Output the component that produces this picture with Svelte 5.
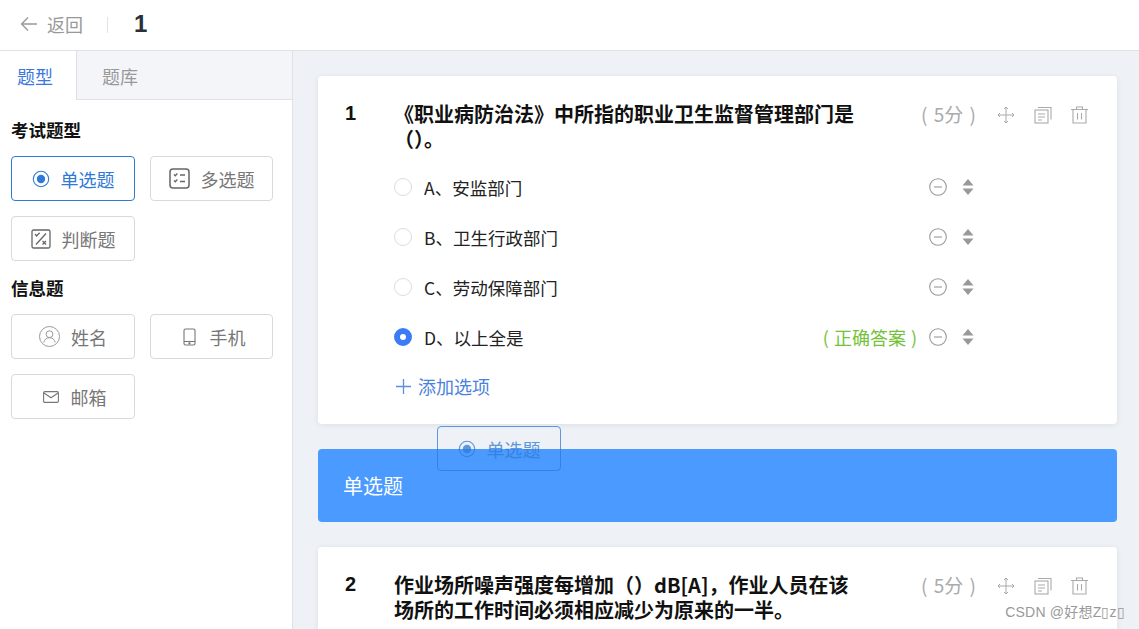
<script>
  const examTypes = [
    { id: 'radio', label: '单选题', active: true },
    { id: 'multi', label: '多选题' },
    { id: 'judge', label: '判断题' }
  ];
  const infoTypes = [
    { id: 'user', label: '姓名' },
    { id: 'phone', label: '手机' },
    { id: 'mail', label: '邮箱' }
  ];
  const options = [
    { text: 'A、安监部门' },
    { text: 'B、卫生行政部门' },
    { text: 'C、劳动保障部门' },
    { text: 'D、以上全是', correct: true }
  ];
</script>

{#snippet typeIcon(id)}
  {#if id === 'radio'}
    <svg class="ic" width="18" height="18" viewBox="0 0 18 18"><circle cx="9" cy="9" r="7.7" fill="none" stroke="currentColor" stroke-width="1.1"/><circle cx="9" cy="9" r="4.2" fill="currentColor"/></svg>
  {:else if id === 'multi'}
    <svg class="ic" width="21" height="21" viewBox="0 0 21 21" fill="none" stroke="#666" stroke-width="1.3"><rect x="1" y="1" width="19" height="19" rx="3" stroke-width="1.5"/><path d="M5 6.5l1.3 1.3 2-2.3M5 12.5l1.3 1.3 2-2.3M11 7h5M11 13.5h5"/></svg>
  {:else if id === 'judge'}
    <svg class="ic" width="20" height="20" viewBox="0 0 20 20" fill="none" stroke="#666" stroke-width="1.3"><rect x="1" y="1" width="18" height="18" rx="1.5"/><path d="M4 5l1.6 2 3-3.2M15 4.5L5 15.5M11.5 12l3.5 3.5M15 12l-3.5 3.5"/></svg>
  {:else if id === 'user'}
    <svg class="ic" width="21" height="21" viewBox="0 0 21 21" fill="none" stroke="#999" stroke-width="1"><circle cx="10.5" cy="10.5" r="10"/><circle cx="10.5" cy="8.2" r="3.4"/><path d="M4.8 16.5c.6-3.2 2.8-4.8 5.7-4.8s5.100 1.600 5.700 4.800"/></svg>
  {:else if id === 'phone'}
    <svg class="ic phone" width="13" height="18" viewBox="0 0 13 18" fill="none" stroke="#777" stroke-width="1.100"><rect x="1" y="1" width="11" height="16" rx="1.500"/><path d="M1 13.500h11"/><circle cx="6.500" cy="15.300" r=".6" fill="#777"/></svg>
  {:else}
    <svg class="ic mail" width="16" height="12" viewBox="0 0 16 12" fill="none" stroke="#777" stroke-width="1.100"><rect x=".6" y=".6" width="14.800" height="10.800" rx="1.200"/><path d="M1 2l7 4.800L15 2"/></svg>
  {/if}
{/snippet}

{#snippet qActions()}
  <div class="q-actions">
    <span class="score">( 5分 )</span>
    <svg width="18" height="18" viewBox="0 0 18 18" fill="none" stroke="#aaa" stroke-width="1"><path d="M9 1v16M1 9h16M7 3l2-2 2 2M7 15l2 2 2-2M3 7L1 9l2 2M15 7l2 2-2 2"/></svg>
    <svg width="18" height="18" viewBox="0 0 18 18" fill="none" stroke="#aaa" stroke-width="1.100"><rect x="1" y="4" width="13" height="13"/><path d="M4 1.500h13v12M4 8h7M4 11h7M4 14h4"/></svg>
    <svg width="17" height="18" viewBox="0 0 17 18" fill="none" stroke="#aaa" stroke-width="1.100"><path d="M0 3.500h17M2 3.500V17h13V3.500M5.500 3.500V1h6v2.500M6.500 7v6.500M10.500 7v6.500"/></svg>
  </div>
{/snippet}

<div class="page">
  <header class="topbar">
    <div class="back">
      <svg width="18" height="16" viewBox="0 0 18 16" fill="none" stroke="#999" stroke-width="1.300"><path d="M17 8H1.500M8 1.500L1.500 8 8 14.500"/></svg>
      <span>返回</span>
    </div>
    <i class="divider"></i>
    <h1>1</h1>
  </header>

  <div class="body">
    <aside class="side">
      <div class="tabs">
        <div class="tab on">题型</div>
        <div class="tab">题库</div>
      </div>
      <div class="side-inner">
        <h3>考试题型</h3>
        <div class="btns">
          {#each examTypes as t}
            <div class="btn" class:active={t.active}>
              {@render typeIcon(t.id)}
              <span>{t.label}</span>
            </div>
          {/each}
        </div>
        <h3 class="second">信息题</h3>
        <div class="btns">
          {#each infoTypes as t}
            <div class="btn">
              {@render typeIcon(t.id)}
              <span>{t.label}</span>
            </div>
          {/each}
        </div>
      </div>
    </aside>

    <main class="main">
      <section class="card">
        <div class="q-head">
          <b class="num">1</b>
          <div class="q-title">《职业病防治法》中所指的职业卫生监督管理部门是（）。</div>
          {@render qActions()}
        </div>
        <ul class="opts">
          {#each options as o}
            <li class="opt">
              <span class="radio" class:checked={o.correct}></span>
              <span class="opt-text">{o.text}</span>
              {#if o.correct}<span class="right">( 正确答案 )</span>{/if}
              <svg class="minus" width="18" height="18" viewBox="0 0 18 18" fill="none" stroke="#999" stroke-width="1.100"><circle cx="9" cy="9" r="8.300"/><path d="M5 9h8"/></svg>
              <svg class="sort" width="12" height="16" viewBox="0 0 12 16" fill="#999"><path d="M6 0l5.500 6.500H.5zM6 16L.5 9.500h11z"/></svg>
            </li>
          {/each}
        </ul>
        <div class="add">
          <svg width="15" height="15" viewBox="0 0 15 15" stroke="#5b8fe0" stroke-width="1.300"><path d="M7.500 0v15M0 7.500h15"/></svg>
          添加选项
        </div>
      </section>

      <section class="banner">单选题</section>

      <section class="card second-card">
        <div class="q-head">
          <b class="num">2</b>
          <div class="q-title">作业场所噪声强度每增加（）dB[A]，作业人员在该场所的工作时间必须相应减少为原来的一半。</div>
          {@render qActions()}
        </div>
      </section>
    </main>
  </div>

  <div class="ghost">
    {@render typeIcon('radio')}
    <span>单选题</span>
  </div>
  <div class="mark">CSDN @好想Z▯z▯</div>
</div>

<style>
  :global(body) {
    margin: 0;
    overflow: hidden;
  }
  .page {
    position: relative;
    width: 1139px;
    height: 629px;
    overflow: hidden;
    background: #fff;
    font-family: "Noto Sans CJK SC", "Liberation Sans", sans-serif;
    color: #222;
  }
  .topbar {
    display: flex;
    align-items: center;
    height: 47px;
    padding: 0 0 3px 20px;
    border-bottom: 1px solid #dfe1e6;
    box-sizing: content-box;
  }
  .back {
    display: flex;
    align-items: center;
    gap: 9px;
    color: #999;
    font-size: 18px;
  }
  .divider {
    width: 1px;
    height: 16px;
    background: #e3e3e3;
    margin: 3px 26px 0 24px;
  }
  h1 {
    margin: 0;
    font: 700 24px "Liberation Sans", sans-serif;
    color: #2b2f36;
  }
  .body {
    display: flex;
    height: 578px;
  }
  .side {
    width: 292px;
    flex: none;
    border-right: 1px solid #dfe1e6;
  }
  .tabs {
    display: flex;
    height: 48px;
    background: #f3f5f9;
    border-bottom: 1px solid #dfe1e6;
  }
  .tab {
    width: 86px;
    text-align: center;
    line-height: 50px;
    font-size: 18px;
    color: #999;
  }
  .tab.on {
    width: 77px;
    height: 49px;
    box-sizing: border-box;
    padding-left: 17px;
    text-align: left;
    background: #fff;
    color: #3d78e0;
    border-right: 1px solid #dfe1e6;
  }
  .side-inner {
    padding: 18px 11px 0;
  }
  h3 {
    margin: 0 0 14px;
    font-size: 17.500px;
    line-height: 24px;
    font-weight: 700;
    color: #111;
  }
  h3.second {
    margin: 15px 0 14px;
  }
  .btns {
    display: flex;
    flex-wrap: wrap;
    gap: 15px;
    width: 270px;
  }
  .btn {
    width: 124px;
    height: 45px;
    box-sizing: border-box;
    border: 1px solid #d9d9d9;
    border-radius: 4px;
    display: flex;
    align-items: center;
    justify-content: center;
    gap: 11px;
    font-size: 18px;
    color: #777;
  }
  .btn.active {
    border-color: #2f7ad6;
    color: #2f7ad6;
  }
  .btns .btn:nth-child(2) {
    width: 123px;
  }
  .phone {
    margin: 0 3px 0 5px;
  }
  .mail {
    margin: 0 1px 0 3px;
  }
  .main {
    flex: 1;
    background: #eef1f5;
    padding: 25px 22px 0 25px;
    min-width: 0;
  }
  .card {
    background: #fff;
    border-radius: 4px;
    box-shadow: 0 1px 6px rgba(0, 0, 0, .08);
    height: 348px;
    box-sizing: border-box;
    padding: 25px 27px 0;
  }
  .second-card {
    height: 120px;
  }
  .q-head {
    display: flex;
    align-items: flex-start;
  }
  .num {
    width: 49px;
    flex: none;
    font: 700 20px/25px "Liberation Sans", sans-serif;
    color: #111;
  }
  .q-title {
    width: 462px;
    font-size: 20px;
    line-height: 25px;
    font-weight: 700;
    color: #111;
  }
  .q-actions {
    display: flex;
    align-items: center;
    margin-left: 65px;
    gap: 19px;
    height: 27px;
    color: #aaa;
  }
  .score {
    font-size: 19px;
    word-spacing: 2px;
    white-space: nowrap;
    margin: 0 2px 3px 0;
  }
  .opts {
    list-style: none;
    margin: 11px 0 0;
    padding: 0 0 0 49px;
  }
  .opt {
    display: flex;
    align-items: center;
    height: 50px;
    width: 580px;
  }
  .radio {
    width: 18px;
    height: 18px;
    box-sizing: border-box;
    border-radius: 50%;
    border: 1px solid #ddd;
    flex: none;
  }
  .radio.checked {
    border: 6px solid #3b7bf6;
    background: #fff;
  }
  .opt-text {
    margin-left: 12px;
    font-size: 17.500px;
    color: #222;
  }
  .right {
    margin-left: auto;
    margin-right: 12px;
    font-size: 18px;
    word-spacing: 1px;
    color: #74c23a;
  }
  .minus {
    margin-left: auto;
    flex: none;
  }
  .right + .minus {
    margin-left: 0;
  }
  .sort {
    margin-left: 15px;
    flex: none;
  }
  .add {
    display: flex;
    align-items: center;
    gap: 7px;
    margin: -1px 0 0 51px;
    height: 50px;
    color: #4a82dc;
    font-size: 18px;
  }
  .banner {
    margin: 25px 0;
    height: 73px;
    background: #4a9aff;
    border-radius: 4px;
    padding-left: 25px;
    box-sizing: border-box;
    line-height: 74px;
    font-size: 20px;
    color: #fff;
  }
  .ghost {
    position: absolute;
    left: 437px;
    top: 426px;
    width: 124px;
    height: 45px;
    box-sizing: border-box;
    border: 1px solid #2f7ad6;
    border-radius: 4px;
    display: flex;
    align-items: center;
    justify-content: center;
    gap: 11px;
    font-size: 18px;
    color: #2f7ad6;
    opacity: .75;
  }
  .mark {
    position: absolute;
    right: 14px;
    top: 602px;
    font-size: 14px;
    letter-spacing: .2px;
    line-height: 20px;
    color: #999;
    font-family: "Liberation Sans", "Noto Sans CJK SC", sans-serif;
  }
</style>
